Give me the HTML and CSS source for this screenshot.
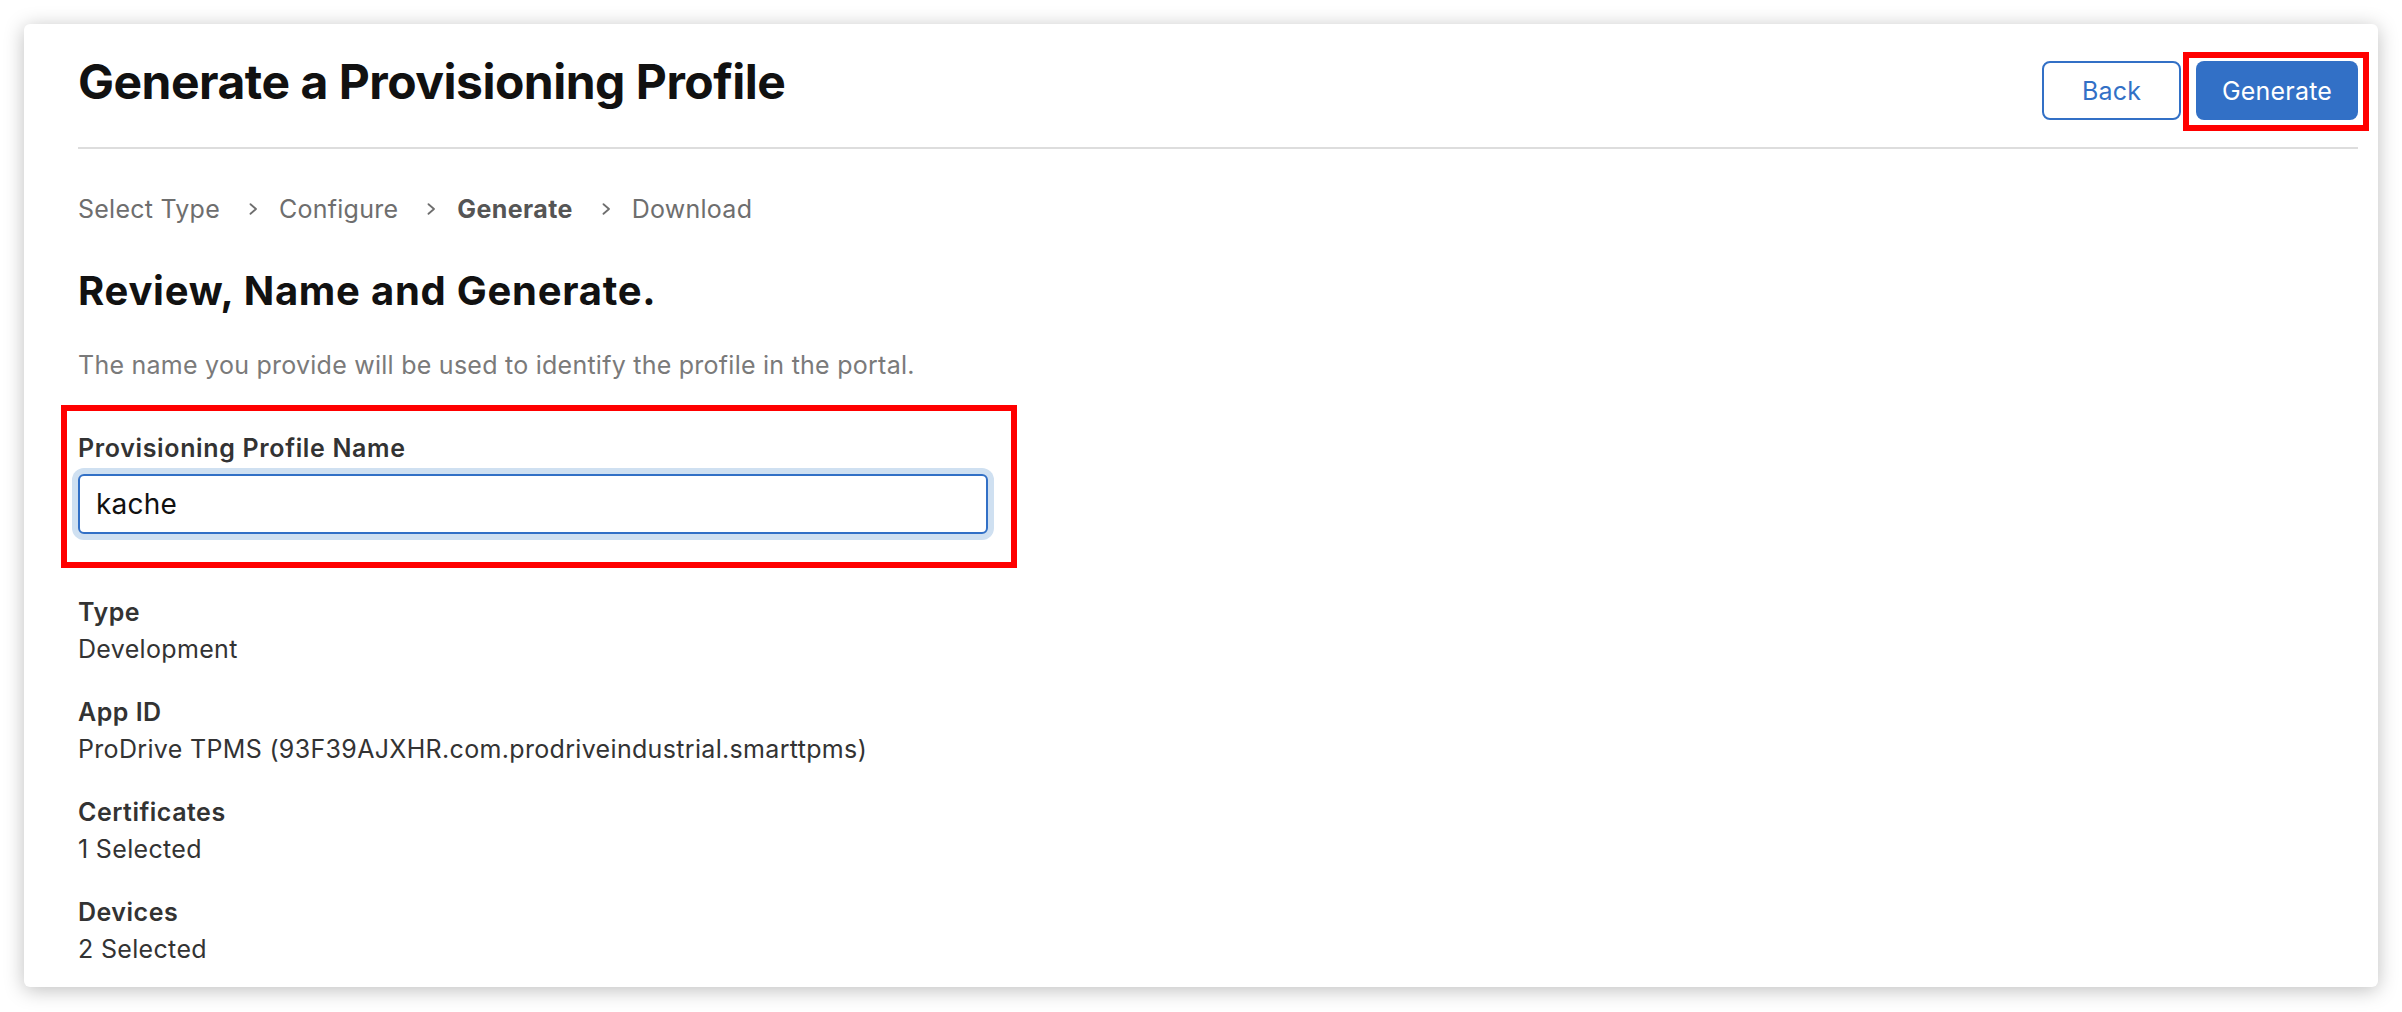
FILE: index.html
```html
<!DOCTYPE html>
<html lang="en">
<head>
<meta charset="utf-8">
<title>Generate a Provisioning Profile</title>
<link rel="stylesheet" href="styles.css">
</head>
<body>
<div class="page">
  <main class="card">
    <header class="head">
      <h1 class="title">Generate a Provisioning Profile</h1>
      <div class="actions">
        <button class="btn btn-secondary" type="button">Back</button>
        <div class="mark-wrap">
          <button class="btn btn-primary" type="button">Generate</button>
          <span class="mark"></span>
        </div>
      </div>
    </header>

    <nav class="crumbs">
      <span class="crumb">Select Type</span>
      <svg class="chev" width="9" height="12" viewBox="0 0 9 12"><polyline points="1.5,1.2 7,6 1.5,10.8" fill="none" stroke="#6e6e6e" stroke-width="1.8" stroke-linecap="round" stroke-linejoin="round"/></svg>
      <span class="crumb">Configure</span>
      <svg class="chev" width="9" height="12" viewBox="0 0 9 12"><polyline points="1.5,1.2 7,6 1.5,10.8" fill="none" stroke="#6e6e6e" stroke-width="1.8" stroke-linecap="round" stroke-linejoin="round"/></svg>
      <span class="crumb crumb-current">Generate</span>
      <svg class="chev" width="9" height="12" viewBox="0 0 9 12"><polyline points="1.5,1.2 7,6 1.5,10.8" fill="none" stroke="#6e6e6e" stroke-width="1.8" stroke-linecap="round" stroke-linejoin="round"/></svg>
      <span class="crumb">Download</span>
    </nav>

    <h2 class="subtitle">Review, Name and Generate.</h2>
    <p class="desc">The name you provide will be used to identify the profile in the portal.</p>

    <div class="highlight">
      <label class="field-label" for="pname">Provisioning Profile Name</label>
      <input class="field-input" id="pname" type="text" value="kache">
    </div>

    <dl class="details">
      <div class="detail"><dt>Type</dt><dd>Development</dd></div>
      <div class="detail"><dt>App ID</dt><dd>ProDrive TPMS (93F39AJXHR.com.prodriveindustrial.smarttpms)</dd></div>
      <div class="detail"><dt>Certificates</dt><dd>1 Selected</dd></div>
      <div class="detail"><dt>Devices</dt><dd>2 Selected</dd></div>
    </dl>
  </main>
</div>
</body>
</html>
```

FILE: styles.css
```css
* { box-sizing: border-box; }
html, body { margin: 0; padding: 0; background: #ffffff; }
body {
  font-family: "Inter", "Liberation Sans", sans-serif;
  color: #333333;
}
.page {
  height: 1012px;
  padding: 24px 24px 25px 24px;
  display: flex;
  flex-direction: column;
}
.card {
  flex: 1;
  background: #ffffff;
  border-radius: 6px;
  box-shadow: 0 3px 20px rgba(0, 0, 0, 0.26);
  padding: 29px 20px 0 54px;
  display: flex;
  flex-direction: column;
}
.head {
  display: flex;
  justify-content: space-between;
  align-items: flex-start;
  padding-bottom: 27px;
  border-bottom: 2px solid #dddddd;
}
.title {
  margin: 0;
  font-size: 48px;
  line-height: 58px;
  font-weight: 700;
  letter-spacing: -0.5px;
  color: #111111;
}
.actions {
  display: flex;
  gap: 15px;
  margin-top: 8px;
}
.btn {
  height: 59px;
  border-radius: 8px;
  font-family: inherit;
  font-size: 25px;
  font-weight: 400;
  letter-spacing: 0.2px;
  cursor: pointer;
}
.btn-secondary {
  width: 139px;
  background: #ffffff;
  color: #3270c6;
  border: 2px solid #3270c6;
}
.btn-primary {
  width: 162px;
  background: #3270c6;
  color: #ffffff;
  border: none;
  display: block;
}
.mark-wrap { position: relative; }
.mark {
  position: absolute;
  top: -9px; left: -13px; right: -11px; bottom: -11px;
  border: 6px solid #ff0000;
  pointer-events: none;
}
.crumbs {
  display: flex;
  align-items: center;
  margin-top: 45px;
  height: 30px;
  font-size: 25px;
  line-height: 30px;
  letter-spacing: 0.25px;
  color: #6e6e6e;
}
.chev { margin: 0 21px 0 29px; }
.crumb-current { font-weight: 700; color: #555555; letter-spacing: 0.4px; }
.subtitle {
  margin: 43px 0 0 0;
  font-size: 40px;
  line-height: 48px;
  font-weight: 700;
  letter-spacing: 0.75px;
  color: #111111;
}
.desc {
  margin: 35px 0 0 0;
  font-size: 25px;
  line-height: 30px;
  letter-spacing: 0.25px;
  color: #7a7a7a;
}
.highlight {
  margin: 25px 0 0 -17px;
  width: 956px;
  border: 6px solid #ff0000;
  padding: 22px 23px 28px 11px;
  display: flex;
  flex-direction: column;
}
.field-label {
  font-size: 25px;
  line-height: 30px;
  font-weight: 600;
  letter-spacing: 0.65px;
  color: #333333;
}
.field-input {
  margin-top: 11px;
  width: 910px;
  height: 60px;
  border: 2px solid #3270c6;
  border-radius: 6px;
  box-shadow: 0 0 0 6px #cfe0f1;
  padding: 0 17px 0 16px;
  font-family: inherit;
  font-size: 28px;
  letter-spacing: 0.2px;
  color: #111111;
  outline: none;
}
.details {
  margin: 26px 0 0 0;
  display: flex;
  flex-direction: column;
  gap: 26px;
}
.detail dt {
  font-size: 25px;
  line-height: 37px;
  font-weight: 600;
  letter-spacing: 0.5px;
  color: #333333;
}
.detail dd {
  margin: 0;
  font-size: 25px;
  line-height: 37px;
  letter-spacing: 0.33px;
  color: #333333;
}
```
